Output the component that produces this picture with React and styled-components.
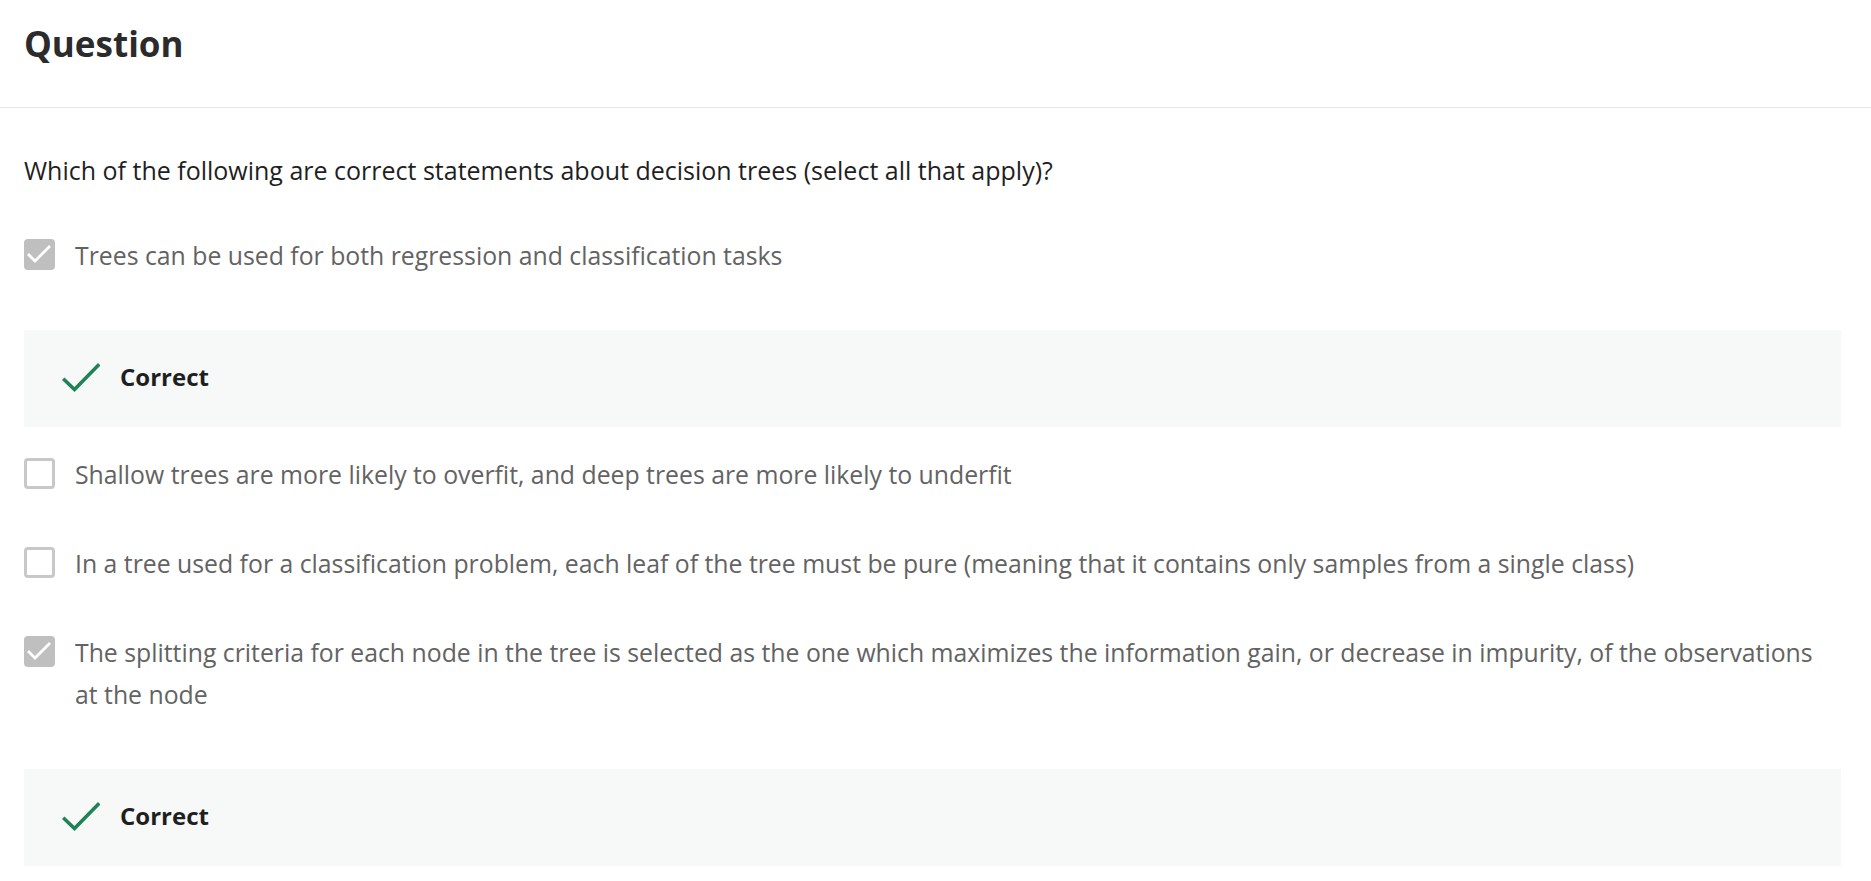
import styled, { createGlobalStyle } from "styled-components"

const GlobalStyle = createGlobalStyle`
  html, body {
    margin: 0;
    padding: 0;
    background: #ffffff;
  }
  body {
    font-family: "Open Sans", "Noto Sans", sans-serif;
    color: #1f1f1f;
  }
`

const options = [
  { text: "Trees can be used for both regression and classification tasks", checked: true, feedback: "Correct" },
  { text: "Shallow trees are more likely to overfit, and deep trees are more likely to underfit", checked: false },
  { text: "In a tree used for a classification problem, each leaf of the tree must be pure (meaning that it contains only samples from a single class)", checked: false },
  { text: "The splitting criteria for each node in the tree is selected as the one which maximizes the information gain, or decrease in impurity, of the observations at the node", checked: true, feedback: "Correct" },
]

const CheckMark = ({ color, width, height, d, strokeWidth }) => (
  <svg width={width} height={height} viewBox={`0 0 ${width} ${height}`} fill="none">
    <path d={d} stroke={color} strokeWidth={strokeWidth} strokeLinecap="square" strokeLinejoin="miter" />
  </svg>
)

export default function App() {
  return (
    <>
      <GlobalStyle />
      <Page>
        <Header>
          <Title>Question</Title>
        </Header>
        <Body>
          <Prompt>Which of the following are correct statements about decision trees (select all that apply)?</Prompt>
          {options.map((option, index) => (
            <div key={index}>
              <OptionRow $hasFeedback={!!option.feedback}>
                <Box $checked={option.checked}>
                  {option.checked && (
                    <CheckMark color="#ffffff" width={31} height={31} d="M5 16 L11 22 L25 8" strokeWidth={2.8} />
                  )}
                </Box>
                <OptionText>{option.text}</OptionText>
              </OptionRow>
              {option.feedback && (
                <Feedback>
                  <CheckMark color="#1f8354" width={38} height={30} d="M2.5 18 L12.5 27.5 L36 3.5" strokeWidth={3.6} />
                  <FeedbackText>{option.feedback}</FeedbackText>
                </Feedback>
              )}
            </div>
          ))}
        </Body>
      </Page>
    </>
  )
}

const Page = styled.div`
  width: 100%;
  min-height: 881px;
  background: #ffffff;
`

const Header = styled.header`
  box-sizing: border-box;
  height: 108px;
  padding: 20px 24px 0;
  border-bottom: 1px solid #e3e5e6;
`

const Title = styled.h2`
  margin: 0;
  font-size: 35px;
  line-height: 48px;
  font-weight: 700;
  color: #2b2b2b;
`

const Body = styled.div`
  padding: 41px 30px 0 24px;
`

const Prompt = styled.p`
  margin: 0 0 43px;
  font-size: 25px;
  line-height: 42px;
  color: #1f1f1f;
`

const OptionRow = styled.div`
  display: flex;
  align-items: flex-start;
  gap: 20px;
  margin-bottom: ${(p) => (p.$hasFeedback ? 54 : 47)}px;
`

const Box = styled.span`
  box-sizing: border-box;
  flex: 0 0 31px;
  width: 31px;
  height: 31px;
  margin-top: 5px;
  border-radius: 4px;
  background: ${(p) => (p.$checked ? "#bfbfbf" : "#ffffff")};
  border: ${(p) => (p.$checked ? "none" : "3px solid #c8c8c8")};
  display: flex;
  align-items: center;
  justify-content: center;
`

const OptionText = styled.span`
  max-width: 1755px;
  font-size: 24.8px;
  line-height: 42px;
  color: #636363;
`

const Feedback = styled.div`
  box-sizing: border-box;
  height: 97px;
  margin-bottom: 26px;
  padding: 0 0 4px 38px;
  display: flex;
  align-items: center;
  gap: 20px;
  background: #f6f9f8;
`

const FeedbackText = styled.span`
  font-size: 24px;
  font-weight: 700;
  color: #1f1f1f;
`
